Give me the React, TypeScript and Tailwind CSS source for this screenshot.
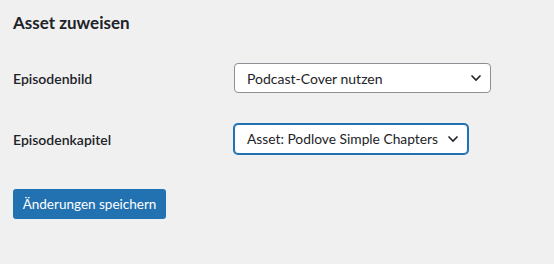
import React from "react";

function Chevron() {
  return (
    <svg width="12" height="8" viewBox="0 0 12 8" className="absolute right-[8px] top-1/2 -translate-y-1/2" fill="none">
      <path d="M1.5 1.5 L6 6 L10.5 1.5" stroke="#1d2327" strokeWidth="1.6" />
    </svg>
  );
}

export default function App() {
  return (
    <div className="w-[554px] h-[264px] bg-[#f0f0f1] text-[#1d2327] pl-[13px] pt-[12px]" style={{ fontFamily: 'Lato, "Noto Sans", sans-serif' }}>
      <h2 className="text-[17px] font-bold leading-[22px]">Asset zuweisen</h2>
      <div className="mt-[29px] flex items-center h-[30px]">
        <div className="w-[221px] text-[14px] font-semibold">Episodenbild</div>
        <div className="relative w-[257px] h-[30px] bg-white border border-[#8c8f94] rounded-[4px] text-[14px] pl-[12px] flex items-center">
          Podcast-Cover nutzen
          <Chevron />
        </div>
      </div>
      <div className="mt-[31px] flex items-center h-[30px]">
        <div className="w-[221px] text-[14px] font-semibold">Episodenkapitel</div>
        <div className="relative w-[234px] h-[30px] bg-white border border-[#2271b1] shadow-[0_0_0_1px_#2271b1] rounded-[4px] text-[13.8px] pl-[12px] flex items-center">
          Asset: Podlove Simple Chapters
          <Chevron />
        </div>
      </div>
      <button className="mt-[35px] h-[30px] w-[153px] bg-[#2271b1] text-white text-[13.5px] rounded-[3px] flex items-center justify-center">
        Änderungen speichern
      </button>
    </div>
  );
}
